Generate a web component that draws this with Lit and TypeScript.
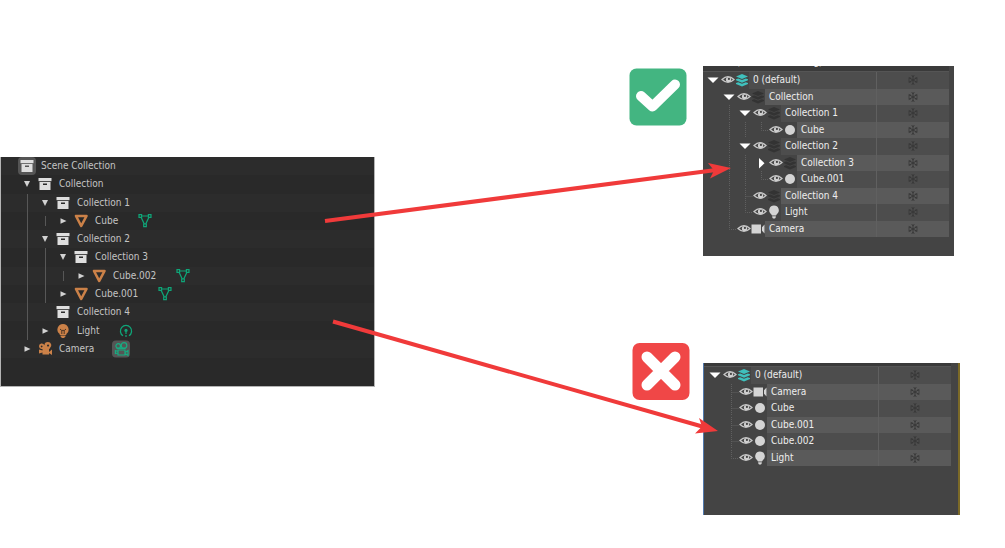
import { LitElement, html, css, svg, nothing } from "lit";
import { customElement, property } from "lit/decorators.js";

type BlenderRow = { guides: string; icon: string; label: string; data?: string };
type MaxRow = { tree: string; icon: string; label: string };

const blenderRows: BlenderRow[] = [
  { guides: "", icon: "box-active", label: "Scene Collection" },
  { guides: "v", icon: "box", label: "Collection" },
  { guides: "|v", icon: "box", label: "Collection 1" },
  { guides: "|.>", icon: "mesh", label: "Cube", data: "mesh-data" },
  { guides: "|v", icon: "box", label: "Collection 2" },
  { guides: "||v", icon: "box", label: "Collection 3" },
  { guides: "||.>", icon: "mesh", label: "Cube.002", data: "mesh-data" },
  { guides: "||>", icon: "mesh", label: "Cube.001", data: "mesh-data" },
  { guides: "| ", icon: "box", label: "Collection 4" },
  { guides: "|>", icon: "bulb", label: "Light", data: "light-data" },
  { guides: ">", icon: "camera", label: "Camera", data: "camera-data" },
];

const nestedRows: MaxRow[] = [
  { tree: "v", icon: "layer-on", label: "0 (default)" },
  { tree: " v", icon: "layer", label: "Collection" },
  { tree: " |v", icon: "layer", label: "Collection 1" },
  { tree: " ||L", icon: "dot", label: "Cube" },
  { tree: " |v", icon: "layer", label: "Collection 2" },
  { tree: " ||>", icon: "layer", label: "Collection 3" },
  { tree: " ||L", icon: "dot", label: "Cube.001" },
  { tree: " |T", icon: "layer", label: "Collection 4" },
  { tree: " |L", icon: "lamp", label: "Light" },
  { tree: " L", icon: "cam", label: "Camera" },
];

const flatRows: MaxRow[] = [
  { tree: "v", icon: "layer-on", label: "0 (default)" },
  { tree: " T", icon: "cam", label: "Camera" },
  { tree: " T", icon: "dot", label: "Cube" },
  { tree: " T", icon: "dot", label: "Cube.001" },
  { tree: " T", icon: "dot", label: "Cube.002" },
  { tree: " L", icon: "lamp", label: "Light" },
];

const box = svg`<path fill="#dedede" d="M2.500 3h13v3.200h-13z"/><path fill="#dedede" fill-rule="evenodd" d="M3.500 7h11v8h-11zM7 8.400v1.600h4V8.400z"/>`;

const movieCamera = svg`<circle cx="6.200" cy="6" r="2.300"/><circle cx="12" cy="5.500" r="2.800"/><path d="M4.500 8.300h9"/><path d="M6 10h7v5H6zM13 12.500l3-2v5l-3-2zM6 11.500l-2.600-1v3L6 13"/>`;

const blenderIcons: Record<string, unknown> = {
  box,
  "box-active": svg`<rect width="18" height="18" rx="4" fill="#555"/>${box}`,
  mesh: svg`<path d="M4 4h10.500L9.200 14z" fill="none" stroke="#cb8148" stroke-width="2.600" stroke-linejoin="round"/>`,
  "mesh-data": svg`<g fill="#292929" stroke="#0fa578" stroke-width="1.200"><path d="M4.500 4h9L9 13.500z"/><path d="M3 2.700h2.600v2.600H3zM12.400 2.700H15v2.600h-2.600zM7.700 12h2.600v2.600H7.700z"/></g>`,
  bulb: svg`<path fill="#cb8148" d="M9 2a5.600 5.600 0 0 0-3.300 10.100V13h6.600v-.9A5.600 5.600 0 0 0 9 2zM6.500 13.600h5v1L10 16H8l-1.500-1.400z"/><path d="M6 7l1.800 1.600V12M12 7l-1.800 1.600V12M7.800 8.400h2.400" fill="none" stroke="#4a3424"/>`,
  "light-data": svg`<path d="M6 13.800a5.600 5.600 0 1 1 6 0" fill="none" stroke="#0fa578" stroke-width="1.300"/><circle cx="9" cy="8.400" r="1.600" fill="#0fa578"/><path d="M9 10v6" stroke="#0fa578" stroke-width="1.200" stroke-dasharray="2 1"/>`,
  camera: svg`<g fill="#cb8148"><path fill-rule="evenodd" d="M12 2a3.400 3.400 0 0 1 2 6.100l-.6 1H13V14.500H6.500V12.500L3 13.500V9.500l3.500 1V9H5.500A2.800 2.800 0 1 1 8.400 5.300 3.500 3.500 0 0 1 12 2zM12 4.400a1 1 0 1 0 .1 0zM5.600 5.400a.9.9 0 1 0 .1 0z"/><path d="M13 12l3-2.500v5.500l-3-2z"/></g>`,
  "camera-data": svg`<rect width="18" height="17" y="0.500" rx="4" fill="#555"/><g fill="none" stroke="#17ad82" stroke-width="1.200">${movieCamera}</g>`,
};

const layers = (color: string) => svg`<g fill="${color}"><path d="M7 1l6 2.500-6 2.500-6-2.500z"/><path d="M1 6.200l2.200-.8L7 7l3.800-1.600 2.200.8v1L7 9.800 1 7.200z"/><path d="M1 10l2.200-.8L7 10.800l3.800-1.600 2.200.8v1L7 13.600 1 11z"/></g>`;

const maxIcons: Record<string, unknown> = {
  "layer-on": layers("#3fc1bd"),
  layer: layers("#333"),
  dot: svg`<circle cx="7" cy="7" r="5" fill="#d4d4d4"/>`,
  lamp: svg`<path fill="#d4d4d4" d="M7 .5a4.800 4.800 0 0 0-2.800 8.700L5 10.500h4l.8-1.300A4.800 4.800 0 0 0 7 .5zM5.200 11.200h3.600v1L8 13.500H6l-.8-1.300z"/>`,
  cam: svg`<path fill="#d4d4d4" d="M.5 2.500h9.500v9H.5zM11 5.200l2.500-2.700v9L11 8.800z"/>`,
};

const eye = svg`<path d="M1 6.500Q7 .8 13 6.500Q7 12.200 1 6.500z" fill="none" stroke="#c8c8c8" stroke-width="1.300"/><circle cx="7.500" cy="6.500" r="2.600" fill="#d0d0d0"/><circle cx="7.900" cy="5.900" r="1.100" fill="#444"/>`;

const snowflake = svg`<g fill="none" stroke="#383838"><path d="M6 1v10M1.700 3.500l8.600 5M1.700 8.500l8.600-5"/><path d="M4.500 1.500 6 3l1.500-1.500M4.500 10.500 6 9l1.500 1.500M1 5h2V3M11 5H9V3M1 7h2v2M11 7H9v2" stroke-width=".8"/></g>`;

@customElement("blender-outliner")
class BlenderOutliner extends LitElement {
  static styles = css`
    :host {
      display: block;
      box-sizing: border-box;
      overflow: hidden;
      border: 1px solid #b4b4b4;
      border-top: 0;
      background: #292929;
      color: #c4c4c4;
      font: 10px/18px "DejaVu Sans Condensed", "DejaVu Sans", sans-serif;
    }
    .rows {
      display: grid;
      grid-auto-rows: 1fr;
      min-height: 201px;
      margin: 0 0 28px;
      padding: 0;
      list-style: none;
    }
    .row {
      display: flex;
      align-items: center;
      padding-left: 17px;
    }
    .row:nth-child(odd) { background: #2c2c2c; }
    .slot {
      display: flex;
      align-self: stretch;
      align-items: center;
      justify-content: center;
      width: 18px;
    }
    .line { width: 1px; height: 100%; background: #575757; }
    .short { height: 10px; }
    .icon { width: 18px; height: 18px; }
    .label { padding: 0 18px 0 5px; white-space: nowrap; }
  `;

  private slotMark(mark: string) {
    if (mark === "|") return html`<span class="line"></span>`;
    if (mark === ".") return html`<span class="line short"></span>`;
    if (mark === " ") return nothing;
    return html`<svg class="icon" viewBox="0 0 18 18">
      <path fill="#d2d2d2" d=${mark === "v" ? "M6 6h6l-3 6z" : "M6.500 6.200v5.600l6-2.800z"}></path>
    </svg>`;
  }

  render() {
    return html`<ul class="rows">
      ${blenderRows.map(
        (row) => html`<li class="row">
          ${[...row.guides].map((mark) => html`<span class="slot">${this.slotMark(mark)}</span>`)}
          <svg class="icon" viewBox="0 0 18 18">${blenderIcons[row.icon]}</svg>
          <span class="label">${row.label}</span>
          ${row.data ? html`<svg class="icon" viewBox="0 0 18 18">${blenderIcons[row.data]}</svg>` : nothing}
        </li>`
      )}
    </ul>`;
  }
}

@customElement("scene-explorer")
class SceneExplorer extends LitElement {
  @property({ attribute: false }) rows: MaxRow[] = [];
  @property() heading = "";

  static styles = css`
    :host {
      display: block;
      box-sizing: border-box;
      overflow: hidden;
      background: #444;
      color: #eee;
      font: 10px/16px "DejaVu Sans Condensed", "DejaVu Sans", sans-serif;
    }
    .heading {
      display: flex;
      align-items: flex-end;
      box-sizing: border-box;
      height: var(--heading-height, 6px);
      margin-right: var(--gutter, 5px);
      padding-left: 4px;
      overflow: hidden;
      border-bottom: 1px solid #555;
      background: #3a3a3a;
    }
    .heading-text { padding-bottom: 1px; white-space: nowrap; }
    .rows {
      display: grid;
      grid-auto-rows: 1fr;
      min-height: var(--rows-height, 165px);
      margin: 0;
      padding: 0 var(--gutter, 5px) 0 var(--inset, 2px);
      list-style: none;
    }
    .row { display: flex; align-items: center; --cell: #4d4d4d; }
    .row:nth-child(even) { --cell: #5a5a5a; }
    .slot { width: 16px; height: 16px; flex: none; }
    .icon { width: 14px; height: 14px; flex: none; }
    .name,
    .freeze {
      display: flex;
      align-self: stretch;
      align-items: center;
      background: var(--cell);
    }
    .name { flex: 1; padding-left: 4px; white-space: nowrap; }
    .freeze {
      box-sizing: border-box;
      width: 73px;
      justify-content: center;
      border-left: 1px solid #606060;
    }
    .flake { width: 12px; height: 12px; }
  `;

  private slotPath(mark: string) {
    if (mark === "v") return svg`<path fill="#fff" d="M2.500 5.500h11L8 11z"/>`;
    if (mark === ">") return svg`<path fill="#fff" d="M6 3v10.500L11.500 8.200z"/>`;
    const lines: Record<string, string> = {
      "|": "M8.500 0v16",
      T: "M8.500 0v16M8.500 8.500H16",
      L: "M8.500 0v8.500H16",
    };
    return svg`<path fill="none" stroke="#606060" stroke-dasharray="1 1" d="${lines[mark] ?? ""}"/>`;
  }

  render() {
    return html`
      <div class="heading"><span class="heading-text">${this.heading}</span></div>
      <ul class="rows">
        ${this.rows.map(
          (row) => html`<li class="row">
            ${[...row.tree].map((mark) => html`<svg class="slot" viewBox="0 0 16 16">${this.slotPath(mark)}</svg>`)}
            <svg class="icon" viewBox="0 0 14 14">${eye}</svg>
            <svg class="icon" viewBox="0 0 14 14">${maxIcons[row.icon]}</svg>
            <span class="name">${row.label}</span>
            <span class="freeze"><svg class="flake" viewBox="0 0 12 12">${snowflake}</svg></span>
          </li>`
        )}
      </ul>
    `;
  }
}

@customElement("app-root")
class AppRoot extends LitElement {
  static styles = css`
    :host { display: block; background: #fff; }
    .board {
      position: relative;
      display: grid;
      grid-template-columns: 375fr 630fr;
      align-items: start;
      min-height: 100vh;
    }
    .source { margin-top: 157px; }
    .results {
      display: grid;
      grid-template-columns: 254fr 331fr;
      row-gap: 87px;
      padding: 66px 45px 0 0;
    }
    .case {
      grid-column: 2;
      display: grid;
      grid-template-columns: 58px 1fr;
      gap: 16px;
      align-items: start;
    }
    .good { margin-right: 6px; }
    .good .badge { margin-top: 2px; }
    .good .explorer { padding-bottom: 19px; }
    .bad {
      gap: 13px;
      padding-left: 3px;
    }
    .bad .explorer {
      --heading-height: 4px;
      --rows-height: 99px;
      --inset: 3px;
      --gutter: 7px;
      margin-top: 20px;
      padding-bottom: 49px;
      border-left: 1px solid #5179ad;
      border-right: 2px solid #7c6a27;
    }
    .badge { width: 58px; height: 58px; }
    .arrows {
      position: absolute;
      top: 0;
      left: 0;
      width: 100%;
      height: 548px;
      pointer-events: none;
    }
  `;

  render() {
    return html`<main class="board">
      <blender-outliner class="source"></blender-outliner>
      <div class="results">
        <section class="case good">
          <svg class="badge" viewBox="0 0 58 58" role="img" aria-label="Correct">
            <rect x="0.500" y="0.500" width="57" height="57" rx="7" fill="#43b581"></rect>
            <path d="M12 28 23.500 38.500 46 16.500" fill="none" stroke="#fff" stroke-width="10" stroke-linecap="round" stroke-linejoin="round"></path>
          </svg>
          <scene-explorer class="explorer" .rows=${nestedRows} heading="Name (Sorted Ascending)"></scene-explorer>
        </section>
        <section class="case bad">
          <svg class="badge" viewBox="0 0 58 58" role="img" aria-label="Wrong">
            <rect x="0.500" y="0" width="57" height="57" rx="7" fill="#f04747"></rect>
            <path d="M15 14l28 28M43 14 15 42" stroke="#fff" stroke-width="11" stroke-linecap="round"></path>
          </svg>
          <scene-explorer class="explorer" .rows=${flatRows}></scene-explorer>
        </section>
      </div>
      <svg class="arrows" viewBox="0 0 1005 548" preserveAspectRatio="none" aria-hidden="true">
        <g stroke="#f03a3a" stroke-width="4" fill="#f03a3a">
          <path d="M325 221 716 170"></path>
          <path d="M333 321.500 704 427"></path>
          <path stroke="none" d="M731 168 710 178.500 714 170.500 708 163z"></path>
          <path stroke="none" d="M718 431 695 433.500 702 426.500 699 418z"></path>
        </g>
      </svg>
    </main>`;
  }
}
